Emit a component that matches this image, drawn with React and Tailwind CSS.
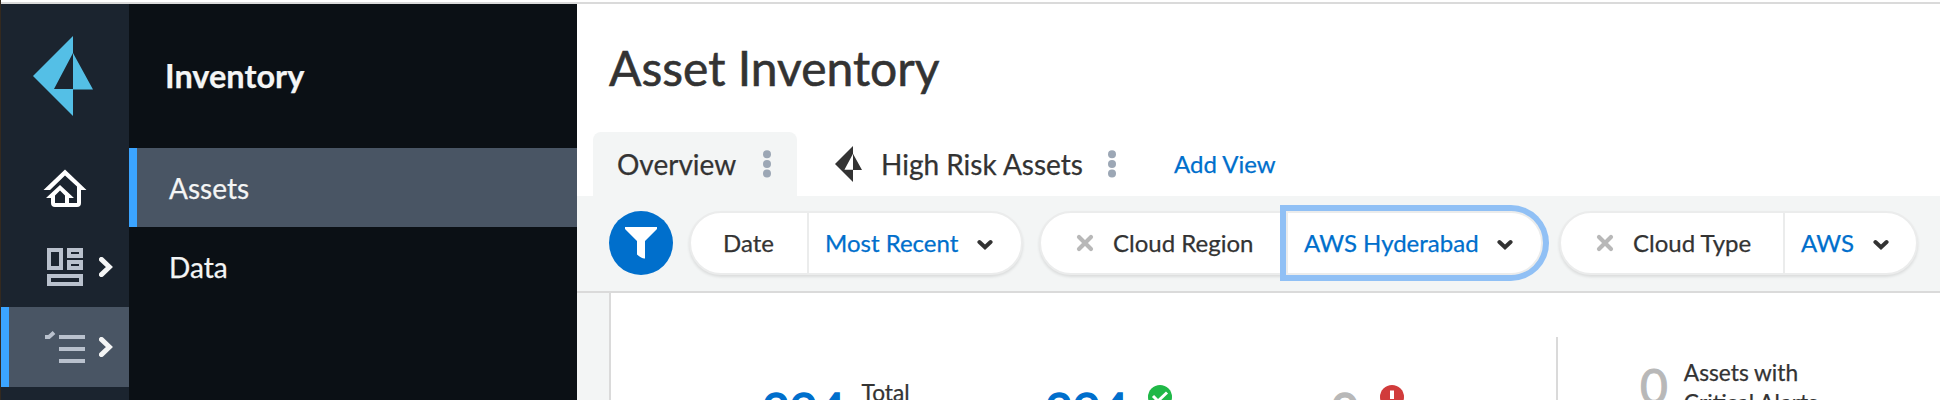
const PRISM = "M40 0 L0 40 L40 80 V53.5 H60 L40 17 Z M40 17 V53 H21 Z";

function Prism({ className }) {
  return (
    <svg viewBox="0 0 60 80" className={className} fill="currentColor">
      <path fillRule="evenodd" d={PRISM} />
    </svg>
  );
}

function RailChevron({ className }) {
  return (
    <svg viewBox="0 0 14 20" className={"h-5 w-3.5 shrink-0 " + className} fill="none" stroke="#f4f5f5" strokeWidth="4.9">
      <path d="M2.4 2.4 L10.4 10 L2.4 17.6" strokeLinecap="round" />
    </svg>
  );
}

function Dots({ className }) {
  return (
    <svg viewBox="0 0 8 28" className={"h-7 w-2 shrink-0 " + className} fill="#9ca7b5">
      <circle cx="4" cy="4.3" r="4" />
      <circle cx="4" cy="14" r="4" />
      <circle cx="4" cy="23.6" r="4" />
    </svg>
  );
}

function Chevron({ className }) {
  return (
    <svg viewBox="0 0 16 12" className={"mt-1 h-3 w-4 shrink-0 " + className} fill="none" stroke="#333" strokeWidth="4">
      <path d="M2.4 3 L8 8.2 L13.6 3" strokeLinecap="round" />
    </svg>
  );
}

function Cross() {
  return (
    <svg viewBox="0 0 18 18" className="h-[18px] w-[18px] shrink-0" fill="none" stroke="#b8b8b8" strokeWidth="4.2">
      <path d="M3 3 L15 15 M15 3 L3 15" strokeLinecap="round" />
    </svg>
  );
}

function Stat({ className, color, value, children }) {
  return (
    <div className={"flex shrink-0 items-start " + className}>
      <span className={"text-[48px] leading-[54px] " + color}>{value}</span>
      {children}
    </div>
  );
}

export default function App() {
  return (
    <div className="flex h-[400px] w-[1940px] flex-col overflow-hidden border-l border-[#33291f] bg-white font-['Lato',sans-serif] text-[#333] whitespace-nowrap [-webkit-text-stroke:0.25px]">
      <div className="h-1 shrink-0 border-b-2 border-[#dadada] bg-white" />
      <div className="flex min-h-0 flex-1">
        <nav className="flex w-32 shrink-0 flex-col bg-[#1b242f]">
          <div className="flex h-[143px] shrink-0 pt-8 pl-8">
            <Prism className="h-20 w-[60px] text-[#54bfe6]" />
          </div>
          <div className="flex h-20 shrink-0 items-center pl-[42px]">
            <svg viewBox="0 -1 44 40" className="h-10 w-11" fill="#fff">
              <path
                fillRule="evenodd"
                d="M22 1.5 L43.5 22 H38 V35 Q38 39 34 39 H12 Q8 39 8 35 V30 H3 L17 17 L31 30 H26 V35 H34 V18.5 L22 7.5 L7 22 H0.5 Z M17 22.5 L12 27.5 V35 H22 V27.5 Z"
              />
            </svg>
          </div>
          <div className="flex h-20 shrink-0 items-center pl-[46px]">
            <svg viewBox="0 0 36 38" className="h-[38px] w-9" fill="none" stroke="#b9c1cd" strokeWidth="4">
              <path d="M2 2 H14 V20 H2 Z M22 2 H34 V8 H22 Z M22 14 H34 V20 H22 Z M2 28 H34 V36 H2 Z" />
            </svg>
            <RailChevron className="ml-4" />
          </div>
          <div className="flex h-20 shrink-0 items-center border-l-8 border-[#3ba4ff] bg-[#495564] pl-9">
            <svg viewBox="0 0 40 32" className="h-8 w-10" fill="none" stroke="#b9c1cd" strokeWidth="4">
              <path d="M14 6 H40 M14 18 H40 M14 30 H40 M0 6 H4 L9 1.5" />
            </svg>
            <RailChevron className="ml-3.5" />
          </div>
        </nav>
        <aside className="flex w-[448px] shrink-0 flex-col bg-[#0b1015] text-[28px] text-[#f4f5f5]">
          <div className="flex h-36 shrink-0 items-center pl-9 text-[32.5px] font-bold">Inventory</div>
          <div className="flex h-[79px] shrink-0 items-center border-l-8 border-[#3ba4ff] bg-[#495564] pl-8">Assets</div>
          <div className="flex h-20 shrink-0 items-center pl-10">Data</div>
        </aside>
        <main className="flex min-w-0 flex-1 flex-col">
          <h1 className="flex h-32 shrink-0 items-center pl-8 text-[48px] [-webkit-text-stroke:0.6px]">Asset Inventory</h1>
          <div className="flex h-16 shrink-0 items-center pl-4 text-[28px]">
            <div className="flex h-full w-[204px] items-center rounded-t-lg bg-[#f3f5f5] pl-6">
              <span className="w-[120px]">Overview</span>
              <Dots className="ml-[26px]" />
            </div>
            <Prism className="ml-[38px] h-9 w-[27px]" />
            <span className="ml-[19px] w-[200px]">High Risk Assets</span>
            <Dots className="ml-[27px]" />
            <span className="ml-[58px] text-[24px] text-[#006fcc]">Add View</span>
          </div>
          <div className="flex h-[97px] shrink-0 items-start border-b-2 border-[#dadada] bg-[#f3f5f5] pt-[15px] pl-8 text-[24px]">
            <div className="flex h-16 w-16 shrink-0 items-center justify-center rounded-full bg-[#006fcc]">
              <svg viewBox="0 0 32 32" className="h-8 w-8" fill="#fff">
                <path d="M0 0 H32 V2 L20 14 V31.5 Q17 32 12 27.5 V14 L0 2 Z" />
              </svg>
            </div>
            <div className="ml-4 flex h-16 w-[334px] shrink-0 items-center rounded-full border-2 border-[#ebecec] bg-white shadow-[0_2px_3px_rgba(0,0,0,0.1)]">
              <span className="w-[116px] pl-8">Date</span>
              <div className="flex h-full flex-1 items-center border-l-2 border-[#ebecec] pl-4 text-[#006fcc]">
                <span className="w-[134px]">Most Recent</span>
                <Chevron className="ml-[18px]" />
              </div>
            </div>
            <div className="ml-4 flex h-16 w-[504px] shrink-0 items-center rounded-full border-2 border-[#ebecec] bg-white shadow-[0_2px_3px_rgba(0,0,0,0.1)]">
              <div className="flex w-[245px] shrink-0 items-center pl-[35px]">
                <Cross />
                <span className="ml-[19px]">Cloud Region</span>
              </div>
              <div className="flex h-16 w-[257px] shrink-0 items-center rounded-r-full border-2 border-[#ebecec] bg-white pl-4 text-[#006fcc] ring-6 ring-[#90c0f5]">
                <span className="w-[175px]">AWS Hyderabad</span>
                <Chevron className="ml-[18px]" />
              </div>
            </div>
            <div className="ml-4 flex h-16 w-[359px] shrink-0 items-center rounded-full border-2 border-[#ebecec] bg-white shadow-[0_2px_3px_rgba(0,0,0,0.1)]">
              <div className="flex w-[222px] items-center pl-[35px]">
                <Cross />
                <span className="ml-[19px]">Cloud Type</span>
              </div>
              <div className="flex h-full flex-1 items-center border-l-2 border-[#ebecec] pl-4 text-[#006fcc]">
                <span className="w-[54px]">AWS</span>
                <Chevron className="ml-[18px]" />
              </div>
            </div>
          </div>
          <div className="flex min-h-0 flex-1 bg-[#f3f5f5] pl-8">
            <section className="flex min-w-0 flex-1 overflow-hidden border-l-2 border-[#dadada] text-[22.7px] leading-[30px]">
              <div className="flex w-full bg-white">
                <Stat className="w-[434px] pt-[90px] pl-[151px]" color="text-[#006fcc] [-webkit-text-stroke:1.5px]" value="294">
                  <span className="-mt-[5px] ml-4">Total</span>
                </Stat>
                <Stat className="w-[286px] pt-[90px]" color="text-[#006fcc] [-webkit-text-stroke:1.5px]" value="294">
                  <svg viewBox="0 0 24 24" className="mt-0.5 ml-[19px] h-6 w-6">
                    <circle cx="12" cy="12" r="12" fill="#1fb847" />
                    <path d="M5 11 L10 16 L19 7.5" fill="none" stroke="#fff" strokeWidth="3" />
                  </svg>
                </Stat>
                <Stat className="w-[225px] pt-[90px]" color="text-[#b8b8b8] [-webkit-text-stroke:1.5px]" value="0">
                  <svg viewBox="0 0 24 24" className="mt-0.5 ml-[21px] h-6 w-6">
                    <circle cx="12" cy="12" r="12" fill="#d13b3b" />
                    <path d="M12 5.5 V14 M12 16 V19" fill="none" stroke="#fff" strokeWidth="4" />
                  </svg>
                </Stat>
                <div className="mt-11 w-0.5 shrink-0 bg-[#dadada]" />
                <Stat className="pt-[66px] pl-[82px]" color="text-[#b8b8b8] [-webkit-text-stroke:1px]" value="0">
                  <span className="-mt-px ml-4">
                    Assets with
                    <br />
                    Critical Alerts
                  </span>
                </Stat>
              </div>
            </section>
          </div>
        </main>
      </div>
    </div>
  );
}
